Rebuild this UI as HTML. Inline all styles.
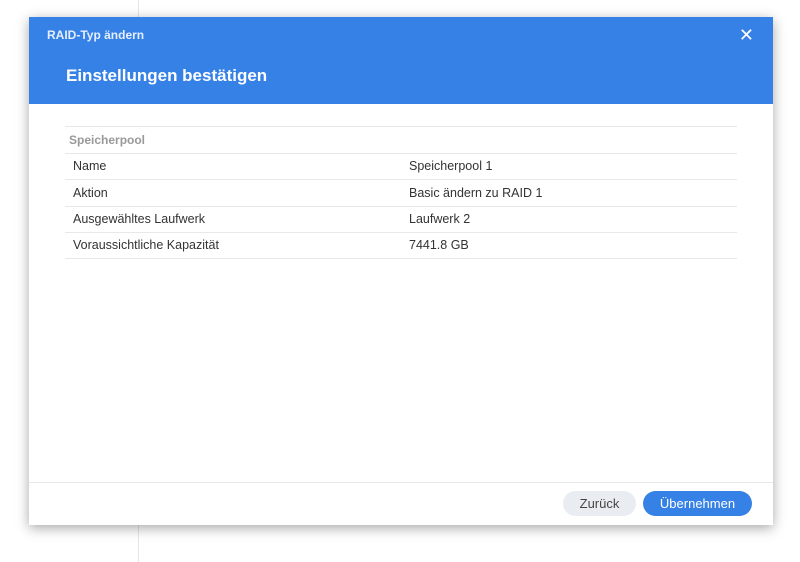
<!DOCTYPE html>
<html><head><style>
body{margin:0;width:800px;height:562px;background:#fff;position:relative;overflow:hidden;font-family:"Liberation Sans",sans-serif}
.vl{position:absolute;left:138px;top:0;width:1px;height:562px;background:#e4e6ea}
.dlg{position:absolute;left:29px;top:17px;width:744px;height:508px;background:#fff;box-shadow:0 3px 12px rgba(0,0,0,.35)}
.hd{position:absolute;left:0;top:0;width:744px;height:87px;background:#3581e6;color:#fff}
.t1{position:absolute;left:18px;top:11px;font-size:12px;font-weight:bold;color:#e6efff}
.t2{position:absolute;left:37px;top:49px;font-size:17px;font-weight:bold}
.x{position:absolute;right:19px;top:8px;font-size:18px;color:#fff}
.row{position:absolute;left:36px;width:672px;height:26px;border-bottom:1px solid #e6e8eb;font-size:12.5px;color:#333;line-height:27px}
.row span{position:absolute;left:8px}
.row b{position:absolute;left:344px;font-weight:normal}
.ft{position:absolute;left:0;top:465px;width:744px;border-top:1px solid #e6e8eb}
.btn{position:absolute;top:474px;height:25px;border-radius:13px;font-size:13px;line-height:25px;text-align:center}
</style></head><body>
<div class="vl"></div>
<div class="dlg">
<div class="hd"><div class="t1">RAID-Typ ändern</div><div class="t2">Einstellungen bestätigen</div><div class="x">✕</div></div>
<div style="position:absolute;left:36px;top:109px;width:672px;border-top:1px solid #e6e8eb"></div>
<div class="row" style="top:110px;color:#999;font-weight:bold;font-size:12px"><span style="left:4px">Speicherpool</span></div>
<div class="row" style="top:136px"><span>Name</span><b>Speicherpool 1</b></div>
<div class="row" style="top:163px"><span>Aktion</span><b>Basic ändern zu RAID 1</b></div>
<div class="row" style="top:189px"><span>Ausgewähltes Laufwerk</span><b>Laufwerk 2</b></div>
<div class="row" style="top:215px"><span>Voraussichtliche Kapazität</span><b>7441.8 GB</b></div>
<div class="ft"></div>
<div class="btn" style="left:534px;width:73px;background:#e9edf2;color:#444">Zurück</div>
<div class="btn" style="left:614px;width:109px;background:#3581e6;color:#fff">Übernehmen</div>
</div>
</body></html>
